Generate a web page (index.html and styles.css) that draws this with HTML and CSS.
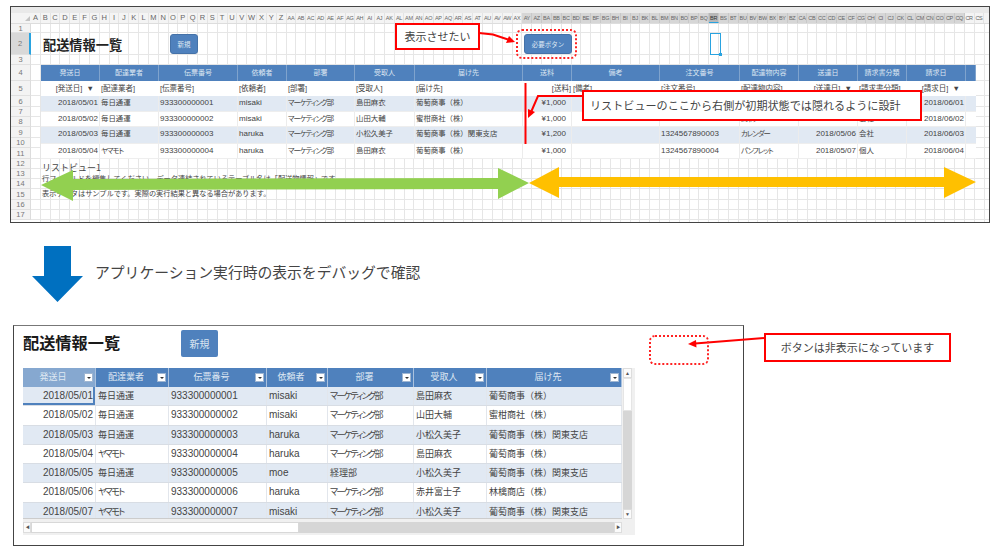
FILE: index.html
```html
<!DOCTYPE html>
<html lang="ja">
<head>
<meta charset="utf-8">
<title>配送情報一覧</title>
<link rel="stylesheet" href="styles.css">
</head>
<body>
<div class="page">
  <section class="sheet">
    <div class="sheet-strip"></div>
    <div class="col-heads">
      <div class="corner"><span class="corner-mark"></span></div>
      <div class="col-labels">
        <span>A</span><span>B</span><span>C</span><span>D</span><span>E</span><span>F</span><span>G</span><span>H</span><span>I</span><span>J</span><span>K</span><span>L</span><span>M</span><span>N</span><span>O</span><span>P</span><span>Q</span><span>R</span><span>S</span><span>T</span><span>U</span><span>V</span><span>W</span><span>X</span><span>Y</span><span>Z</span>
        <span class="dbl">AA</span><span class="dbl">AB</span><span class="dbl">AC</span><span class="dbl">AD</span><span class="dbl">AE</span><span class="dbl">AF</span><span class="dbl">AG</span><span class="dbl">AH</span><span class="dbl">AI</span><span class="dbl">AJ</span><span class="dbl">AK</span><span class="dbl">AL</span><span class="dbl">AM</span><span class="dbl">AN</span><span class="dbl">AO</span><span class="dbl">AP</span><span class="dbl">AQ</span><span class="dbl">AR</span><span class="dbl">AS</span><span class="dbl">AT</span><span class="dbl">AU</span><span class="dbl">AV</span><span class="dbl">AW</span><span class="dbl">AX</span>
        <span class="dbl g">AY</span><span class="dbl g">AZ</span><span class="dbl g">BA</span><span class="dbl g">BB</span><span class="dbl g">BC</span><span class="dbl g">BD</span><span class="dbl g">BE</span><span class="dbl g">BF</span><span class="dbl g">BG</span><span class="dbl g">BH</span><span class="dbl g">BI</span><span class="dbl g">BJ</span><span class="dbl g">BK</span><span class="dbl g">BL</span><span class="dbl g">BM</span><span class="dbl g">BN</span><span class="dbl g">BO</span><span class="dbl g">BP</span><span class="dbl g">BQ</span><span class="dbl g active">BR</span><span class="dbl g">BS</span><span class="dbl g">BT</span><span class="dbl g">BU</span><span class="dbl g">BV</span><span class="dbl g">BW</span><span class="dbl g">BX</span><span class="dbl g">BY</span><span class="dbl g">BZ</span><span class="dbl g">CA</span><span class="dbl g">CB</span><span class="dbl g">CC</span><span class="dbl g">CD</span><span class="dbl g">CE</span><span class="dbl g">CF</span><span class="dbl g">CG</span><span class="dbl g">CH</span><span class="dbl g">CI</span><span class="dbl g">CJ</span><span class="dbl g">CK</span><span class="dbl g">CL</span><span class="dbl g">CM</span><span class="dbl g">CN</span><span class="dbl g">CO</span><span class="dbl g">CP</span><span class="dbl g">CQ</span><span class="dbl">CR</span><span class="dbl">CS</span>
      </div>
    </div>
    <div class="sheet-body">
      <div class="rows">
        <div class="row h9"><b>1</b></div>
        <div class="row h22 sel"><b>2</b></div>
        <div class="row h10"><b>3</b></div>
        <div class="row h16"><b>4</b></div>
        <div class="row h15"><b>5</b></div>
        <div class="row h11"><b>6</b></div>
        <div class="row h10"><b>7</b></div>
        <div class="row h10"><b>8</b></div>
        <div class="row h11"><b>9</b></div>
        <div class="row h10"><b>10</b></div>
        <div class="row h11"><b>11</b></div>
        <div class="row h10"><b>12</b></div>
        <div class="row h10"><b>13</b></div>
        <div class="row h10"><b>14</b></div>
        <div class="row h11"><b>15</b></div>
        <div class="row h10"><b>16</b></div>
        <div class="row h10"><b>17</b></div>
      </div>
      <div class="sheet-content">
        <div class="sheet-top">
          <h1 class="sheet-title">配送情報一覧</h1>
          <div class="btn-sm btn-new">新規</div>
          <div class="btn-sm btn-need">必要ボタン</div>
          <div class="active-cell"></div>
        </div>
        <div class="xt">
          <div class="xr xh">
            <span>発送日</span><span>配達業者</span><span>伝票番号</span><span>依頼者</span><span>部署</span><span>受取人</span><span>届け先</span><span>送料</span><span>備考</span><span>注文番号</span><span>配達物内容</span><span>送達日</span><span>請求書分類</span><span>請求日</span><span></span>
          </div>
          <div class="xr xf">
            <span class="r fl">[発送日] &nbsp;▼</span><span>[配達業者]</span><span>[伝票番号]</span><span>[依頼者]</span><span>[部署]</span><span>[受取人]</span><span>[届け先]</span><span class="r">[送料]</span><span>[備考]</span><span>[注文番号]</span><span>[配達物内容]</span><span class="r fl">[送達日] &nbsp;▼</span><span>[請求書分類]</span><span class="r fl">[請求日] &nbsp;▼</span>
          </div>
          <div class="xr xd alt t16">
            <span class="r">2018/05/01</span><span class="ja">毎日通運</span><span>933300000001</span><span>misaki</span><span class="cond">マーケティング部</span><span class="ja">島田麻衣</span><span class="ja">葡萄商事（株）</span><span class="r pr">¥1,000</span><span></span><span></span><span></span><span></span><span></span><span class="r">2018/06/01</span>
          </div>
          <div class="xr xd t15">
            <span class="r">2018/05/02</span><span class="ja">毎日通運</span><span>933300000002</span><span>misaki</span><span class="cond">マーケティング部</span><span class="ja">山田大輔</span><span class="ja">蜜柑商社（株）</span><span class="r pr">¥1,000</span><span></span><span>1324567890002</span><span class="ja">封筒</span><span class="r">2018/05/05</span><span class="ja">会社</span><span class="r">2018/06/02</span>
          </div>
          <div class="xr xd alt t17">
            <span class="r">2018/05/03</span><span class="ja">毎日通運</span><span>933300000003</span><span>haruka</span><span class="cond">マーケティング部</span><span class="ja">小松久美子</span><span class="ja">葡萄商事（株）関東支店</span><span class="r pr">¥1,200</span><span></span><span>1324567890003</span><span class="cond">カレンダー</span><span class="r">2018/05/06</span><span class="ja">会社</span><span class="r">2018/06/03</span>
          </div>
          <div class="xr xd t15">
            <span class="r">2018/05/04</span><span class="cond">ヤマモト</span><span>933300000004</span><span>haruka</span><span class="cond">マーケティング部</span><span class="ja">島田麻衣</span><span class="ja">葡萄商事（株）</span><span class="r pr">¥1,000</span><span></span><span>1324567890004</span><span class="cond">パンフレット</span><span class="r">2018/05/07</span><span class="ja">個人</span><span class="r">2018/06/04</span>
          </div>
        </div>
        <div class="notes">
          <p class="note-head">リストビュー1</p>
          <p class="note-a">行フィールドを編集してください。データ連結されているテーブル名は「配送物情報」です。</p>
          <p class="note-b">表示データはサンプルです。実際の実行結果と異なる場合があります。</p>
        </div>
      </div>
    </div>
  </section>

  <section class="middle">
    <svg class="down-arrow" width="51" height="56" viewBox="0 0 51 56"><path d="M12 0H39V30H51L25.500 56 0 30H12Z" fill="#0070c0"/></svg>
    <p class="middle-text">アプリケーション実行時の表示をデバッグで確認</p>
  </section>

  <section class="app">
    <div class="app-head">
      <h2 class="app-title">配送情報一覧</h2>
      <div class="app-btn">新規</div>
    </div>
    <div class="lv">
      <div class="lv-main">
        <div class="lv-table">
          <div class="lr lh">
            <span class="hsel">発送日<i></i></span><span>配達業者<i></i></span><span>伝票番号<i></i></span><span>依頼者<i></i></span><span>部署<i></i></span><span>受取人<i></i></span><span>届け先<i></i></span>
          </div>
          <div class="lr alt"><span class="r cursel">2018/05/01</span><span class="ja">毎日通運</span><span>933300000001</span><span>misaki</span><span class="cond">マーケティング部</span><span class="ja">島田麻衣</span><span class="ja">葡萄商事（株）</span></div>
          <div class="lr"><span class="r">2018/05/02</span><span class="ja">毎日通運</span><span>933300000002</span><span>misaki</span><span class="cond">マーケティング部</span><span class="ja">山田大輔</span><span class="ja">蜜柑商社（株）</span></div>
          <div class="lr alt"><span class="r">2018/05/03</span><span class="ja">毎日通運</span><span>933300000003</span><span>haruka</span><span class="cond">マーケティング部</span><span class="ja">小松久美子</span><span class="ja">葡萄商事（株）関東支店</span></div>
          <div class="lr"><span class="r">2018/05/04</span><span class="cond">ヤマモト</span><span>933300000004</span><span>haruka</span><span class="cond">マーケティング部</span><span class="ja">島田麻衣</span><span class="ja">葡萄商事（株）</span></div>
          <div class="lr alt"><span class="r">2018/05/05</span><span class="ja">毎日通運</span><span>933300000005</span><span>moe</span><span class="ja">経理部</span><span class="ja">小松久美子</span><span class="ja">葡萄商事（株）関東支店</span></div>
          <div class="lr"><span class="r">2018/05/06</span><span class="cond">ヤマモト</span><span>933300000006</span><span>haruka</span><span class="cond">マーケティング部</span><span class="ja">赤井富士子</span><span class="ja">林檎商店（株）</span></div>
          <div class="lr alt last"><span class="r">2018/05/07</span><span class="cond">ヤマモト</span><span>933300000007</span><span>misaki</span><span class="cond">マーケティング部</span><span class="ja">小松久美子</span><span class="ja">葡萄商事（株）関東支店</span></div>
        </div>
        <div class="vs">
          <div class="vs-btn">▲</div>
          <div class="vs-thumb"></div>
          <div class="vs-track"></div>
          <div class="vs-btn">▼</div>
        </div>
      </div>
      <div class="hs">
        <div class="hs-btn">◀</div>
        <div class="hs-thumb"></div>
        <div class="hs-track"></div>
        <div class="hs-btn">▶</div>
      </div>
    </div>
  </section>

  <svg class="marks" width="1000" height="558" viewBox="0 0 1000 558">
    <path d="M41 185 73 170V179L498 178V168L529 183 498 199V189L73 190V201Z" fill="#92d050"/>
    <path d="M529 183 559 167V177H944V167L976 182 944 198V187H559V198Z" fill="#ffc000"/>
    <path d="M525.500 83V144" stroke="#f00" stroke-width="2" fill="none"/>
    <path d="M479 33 493 34.500 508 39.500" stroke="#f00" stroke-width="2" fill="none"/>
    <path d="M515 42 506 43 509 36Z" fill="#f00"/>
    <path d="M582 96H538L531.500 111" stroke="#f00" stroke-width="2" fill="none"/>
    <path d="M528 118 528 109 535 112Z" fill="#f00"/>
    <path d="M764 338 695 343.500" stroke="#f00" stroke-width="2" fill="none"/>
    <path d="M688 344 696 340 696.500 347.500Z" fill="#f00"/>
  </svg>
  <div class="dotted d1"></div>
  <div class="dotted d2"></div>
  <div class="callout c1">表示させたい</div>
  <div class="callout c2">リストビューのここから右側が初期状態では隠れるように設計</div>
  <div class="callout c3">ボタンは非表示になっています</div>
</div>
</body>
</html>
```

FILE: styles.css
```css
* { box-sizing: border-box; }
html, body { margin: 0; padding: 0; background: #fff; }
body {
  font-family: "Noto Sans CJK JP", "Liberation Sans", sans-serif;
  color: #444;
}
p, h1, h2 { margin: 0; }
.page { position: relative; width: 1000px; height: 558px; overflow: hidden; padding: 6px 0 0 10px; }

/* Spreadsheet window */
.sheet { width: 980px; height: 217px; border: 1px solid #444; background: #fff; overflow: hidden; }
.sheet-strip { height: 6px; background: #e9e9e9; }
.col-heads { display: flex; height: 11px; background: #f4f4f4; border-bottom: 1px solid #ddd; }
.corner { width: 20px; position: relative; flex: none; }
.corner-mark { position: absolute; right: 1px; bottom: 2px; border-style: solid; border-width: 0 0 5px 5px; border-color: transparent transparent #c4c4c4 transparent; }
.col-labels { display: grid; grid-template-columns: repeat(97, 9.83px); }
.col-labels span { font: 7.5px/10px "Liberation Sans", sans-serif; color: #666; text-align: center; overflow: hidden; white-space: nowrap; border-right: 1px solid #e4e4e4; }
.col-labels .dbl { font-size: 5.5px; letter-spacing: -.3px; }
.col-labels .g { background: #d6d6d6; border-right-color: #c8c8c8; }
.col-labels .active { background: #b8b8b8; border-bottom: 1px solid #29a3e0; color: #333; }

.sheet-body {
  position: relative;
  height: 198px;
  background-image: repeating-linear-gradient(90deg, transparent 0, transparent 8.83px, #e6e6e6 8.83px, #e6e6e6 9.83px);
  background-position: 20px 0;
  background-repeat: no-repeat;
  background-size: calc(100% - 20px) 100%;
}
.rows { display: flex; flex-direction: column; }
.row { display: flex; border-bottom: 1px solid #e6e6e6; }
.row b { width: 20px; flex: none; background: #f3f3f3; border-bottom: 1px solid #e0e0e0; margin-bottom: -1px; border-right: 1px solid #dcdcdc; color: #777; font: 7.5px/9px "Liberation Sans", sans-serif; text-align: center; display: flex; align-items: center; justify-content: center; }
.h9 { height: 9px; } .h10 { height: 10px; } .h11 { height: 11px; } .h15 { height: 15px; } .h16 { height: 16px; } .h22 { height: 22px; }
.row.sel b { background: #d8d8d8; border-right: 2px solid #29a3e0; }

.sheet-content { position: absolute; left: 30px; top: 0; right: 0; bottom: 0; }
.sheet-top { height: 41px; position: relative; display: flex; align-items: flex-start; }
.sheet-title { font-size: 13.2px; line-height: 18px; font-weight: 700; color: #222; margin: 12px 0 0 2px; width: 127px; flex: none; }
.btn-sm { height: 20px; margin-top: 10px; background: #4f81bd; color: #dfe8f3; border-radius: 3px; font-size: 6.5px; line-height: 18px; text-align: center; border: 1px solid #4572a8; }
.btn-new { width: 28px; }
.btn-need { width: 48px; margin-left: 326px; }
.active-cell { position: absolute; left: 669px; top: 9px; width: 11px; height: 22px; border: 1px solid #29a3e0; }
.active-cell::after { content: ""; position: absolute; right: -2px; bottom: -2px; width: 3px; height: 3px; background: #29a3e0; }

.xt { display: flex; flex-direction: column; width: 935px; }
.xr { display: grid; grid-template-columns: 59px 59px 79px 49px 68px 60px 108px 49px 88px 80px 59px 59px 49px 59px 10px; }
.xr span { font: 8px/15px "Liberation Sans", "Noto Sans CJK JP", sans-serif; padding: 0 1px; white-space: nowrap; overflow: hidden; }
.xh { height: 16px; background: #4f81bd; }
.xh span { color: #dbe5f1; text-align: center; border-right: 1px solid #7fa3cd; font-size: 7px; line-height: 16px; }
.xf { height: 15px; background: #fff; }
.xf span { font-size: 7.5px; }
.xf .fl { padding-right: 6px; }
.xd { background: #fff; border-bottom: 1px solid #eee; }
.xd span { border-right: 1px solid #ececec; padding-left: 1px; line-height: 14px; }
.xr .ja { font-size: 7.4px; }
.xr .cond { font-size: 7.4px; font-feature-settings: "palt"; letter-spacing: -.14em; }
.alt { background: #e1e9f3; }
.t15 { height: 15px; } .t16 { height: 16px; } .t17 { height: 17px; }
.c { text-align: center; }
.r { text-align: right; }
.pr { padding-right: 5px !important; }
.notes { padding: 3px 0 0 1px; font-size: 7.2px; line-height: 10px; color: #444; }
.notes p { white-space: nowrap; }
.notes .note-head { font-size: 9px; line-height: 11px; }
.note-a { height: 15px; line-height: 11px; }
.note-b { height: 12px; }

/* Middle */
.middle { display: flex; height: 103px; margin-left: 22px; align-items: flex-start; }
.down-arrow { flex: none; margin-top: 23px; }
.middle-text { font-size: 14.8px; line-height: 20px; margin: 39px 0 0 12px; color: #444; white-space: nowrap; }

/* App */
.app { width: 731px; height: 221px; margin: -1px 0 0 3px; border: 1px solid #444; border-top-color: #777; padding: 0 9px; background: #fff; }
.app-head { height: 42px; display: flex; align-items: flex-start; }
.app-title { font-size: 16.2px; line-height: 24px; font-weight: 700; color: #1a1a1a; width: 158px; flex: none; margin-top: 4px; }
.app-btn { width: 37px; height: 27px; margin-top: 4px; background: #4f81bd; border-radius: 2px; color: #dce6f1; font-size: 10px; line-height: 27px; text-align: center; }
.lv { width: 612px; height: 167px; background: #f0f0f0; }
.lv-main { display: flex; height: 151px; background: #fff; }
.lv-table { width: 599px; flex: none; height: 151px; overflow: hidden; border-bottom: 1px solid #ccc; }
.lr { display: grid; grid-template-columns: 73px 73px 98px 61px 86px 73px 135px; height: 19.3px; background: #fff; border-bottom: 1px solid #d8dde4; }
.lr.alt { background: #e1e9f3; }
.lr span { font: 10px/18px "Liberation Sans", "Noto Sans CJK JP", sans-serif; border-right: 1px solid #e2e6ec; padding: 0 2px; white-space: nowrap; overflow: hidden; }
.lr .ja { font-size: 9px; }
.lr .cond { font-size: 9px; font-feature-settings: "palt"; letter-spacing: -.18em; }
.lr.last { height: 15px; border: 0; }
.lh { height: 19px; background: #4f81bd; border: 0; }
.lh span { position: relative; color: #dfe8f3; font-size: 9px; text-align: center; padding-right: 14px; border-right: 1px solid #a9c1de; line-height: 19px; }
.lh span.hsel { background: #86a8d0; }
.lh i { position: absolute; right: 2px; top: 5px; width: 9px; height: 9px; background: #fff; border: 1px solid #9fb6d2; }
.lh i::after { content: ""; position: absolute; left: 1.5px; top: 3px; border-style: solid; border-width: 2.500px 2px 0; border-color: #333 transparent transparent; }
.cursel { box-shadow: inset -2px -2px 0 #4f81bd; }
.vs { width: 13px; padding: 0 3px 0 1px; background: #f0f0f0; display: flex; flex-direction: column; height: 151px; flex: none; }
.vs-btn { height: 10px; background: #fbfbfb; border: 1px solid #ddd; font: 5px/8px "Liberation Sans", sans-serif; color: #555; text-align: center; }
.vs-thumb { height: 33px; background: #fff; border: 1px solid #e5e5e5; }
.vs-track { flex: 1; background: #d6d6d6; }
.hs { display: flex; height: 11px; margin: 3px 13px 0 0; width: 599px; }
.hs-btn { width: 8px; background: #fbfbfb; border: 1px solid #ddd; font: 5px/9px "Liberation Sans", sans-serif; color: #555; text-align: center; }
.hs-thumb { width: 268px; background: #fff; border: 1px solid #d8d8d8; }
.hs-track { flex: 1; background: #d6d6d6; }

/* Annotations */
.marks { position: absolute; left: 0; top: 0; pointer-events: none; }
.dotted { position: absolute; border: 2px dotted #f22; border-radius: 6px; }
.d1 { left: 516px; top: 29px; width: 61px; height: 30px; }
.d2 { left: 649px; top: 335px; width: 60px; height: 30px; }
.callout { position: absolute; background: #fff; border: 2px solid #f00; color: #444; font-size: 11px; line-height: 1; white-space: nowrap; display: flex; align-items: center; justify-content: center; }
.c1 { left: 395px; top: 23px; width: 85px; height: 27px; }
.c2 { left: 582px; top: 90px; width: 340px; height: 31px; font-size: 11.1px; justify-content: flex-start; padding-left: 6px; }
.c3 { left: 764px; top: 333px; width: 187px; height: 29px; }
```
